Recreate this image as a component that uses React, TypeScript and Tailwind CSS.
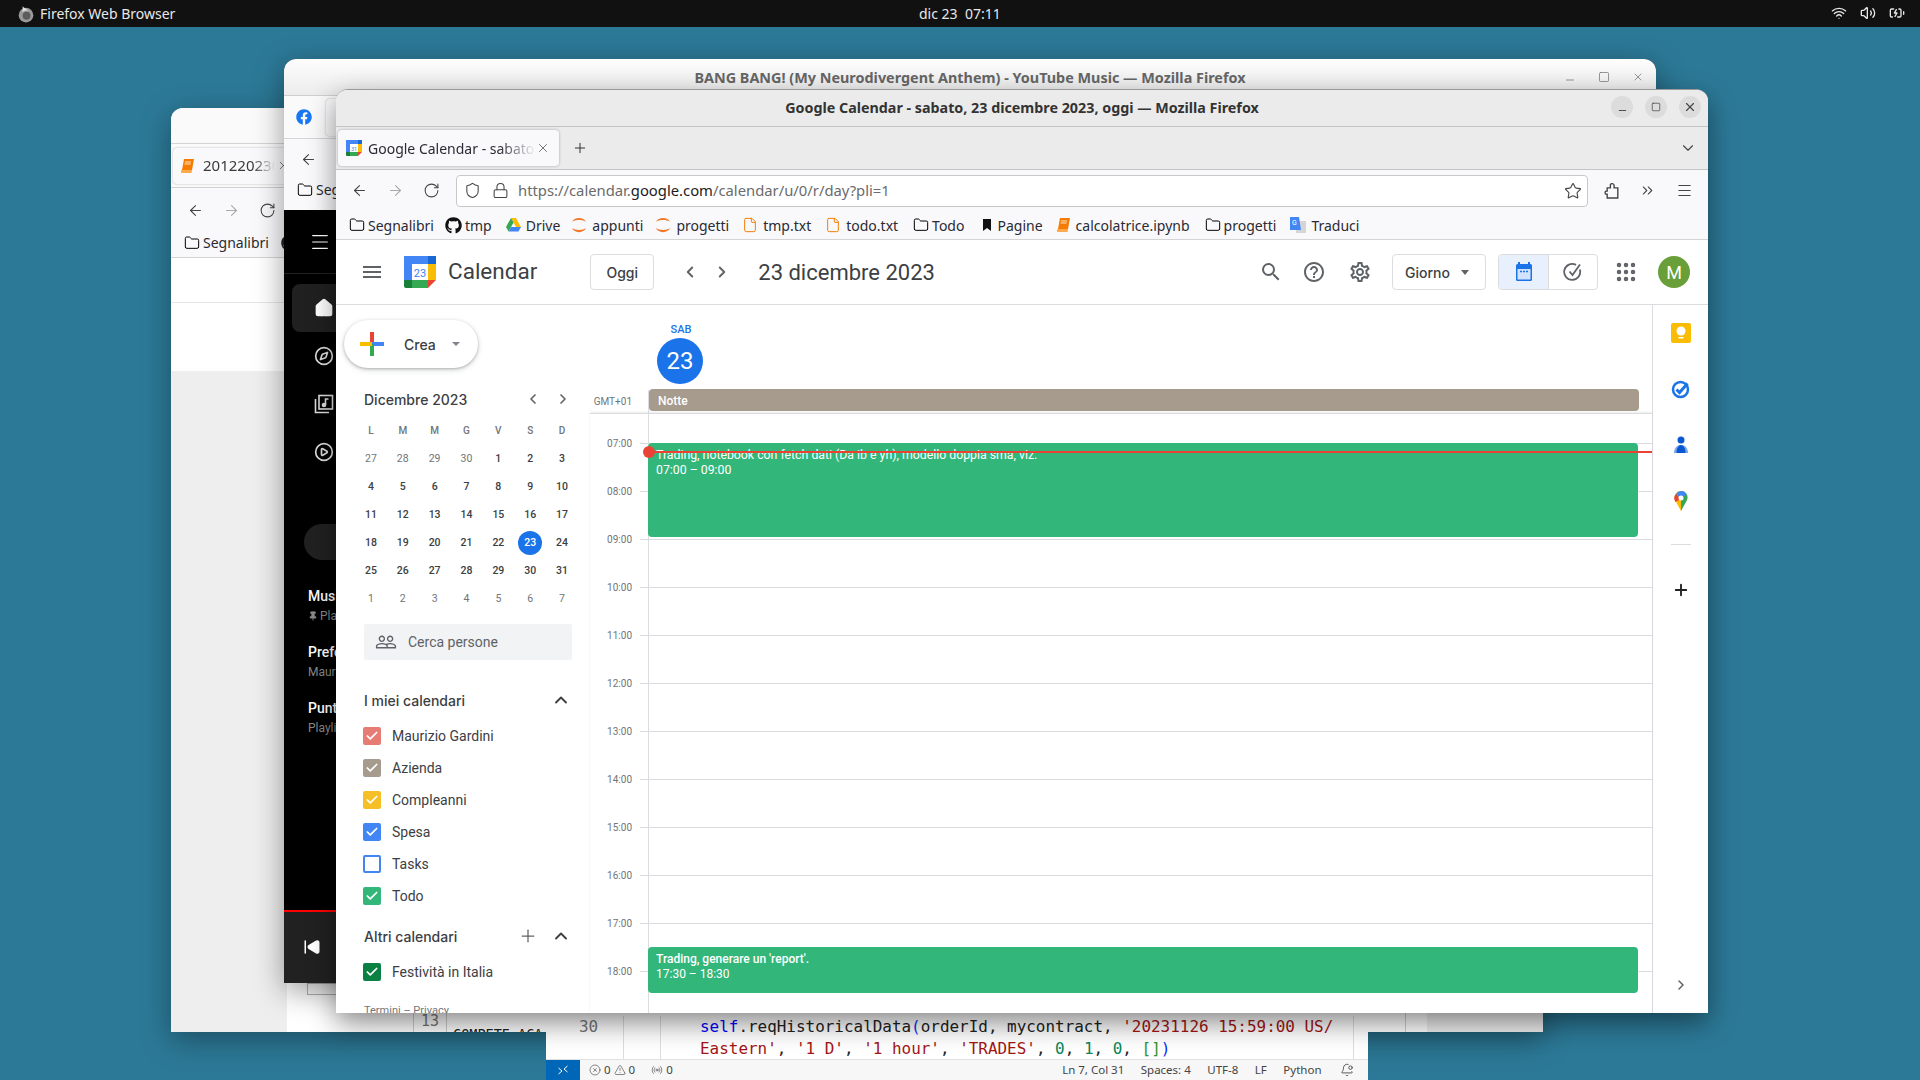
import {
  ArrowLeft,
  ArrowRight,
  BatteryCharging,
  BellDot,
  Check,
  ChevronDown,
  ChevronLeft,
  ChevronRight,
  ChevronUp,
  ChevronsRight,
  CirclePlay,
  CircleX,
  Compass,
  File,
  Folder,
  Grip,
  Home,
  Lock,
  Menu,
  Minus,
  Pin,
  Plus,
  Radio,
  RotateCw,
  Shield,
  SkipBack,
  Square,
  Star,
  TriangleAlert,
  Volume2,
  Wifi,
  X,
} from "lucide-react";
import { FaFacebook, FaGithub } from "react-icons/fa";
import { MdHelpOutline, MdMenu, MdOutlineSettings, MdPeopleOutline, MdSearch } from "react-icons/md";

const ChromeIcon = { size: 17, strokeWidth: 1.5 };
const FolderIcon = { size: 16, strokeWidth: 1.5 };

function CalendarLogo({ size = 32, small = false }: { size?: number; small?: boolean }) {
  return (
    <svg width={size} height={size} viewBox="0 0 32 32" className="shrink-0">
      <rect x="0" y="0" width="25" height="8" rx="1" fill="#4285f4" />
      <rect x="0" y="0" width="8" height="25" rx="1" fill="#4285f4" />
      <rect x="24" y="0" width="8" height="8" fill="#1967d2" />
      <rect x="24" y="8" width="8" height="16" fill="#fbbc04" />
      <rect x="8" y="24" width="16" height="8" fill="#34a853" />
      <path d="M0 24h8v8H2a2 2 0 0 1-2-2z" fill="#188038" />
      <path d="M24 24h8l-8 8z" fill="#ea4335" />
      <rect x="8" y="8" width="16" height="16" fill="#fff" />
      <text x="16" y="21" textAnchor="middle" fontSize="11" fontFamily="Roboto, sans-serif" fill="#4285f4">
        {small ? "31" : "23"}
      </text>
    </svg>
  );
}

function BookIcon() {
  return (
    <svg width="14" height="16" viewBox="0 0 14 16" className="shrink-0">
      <path d="M3 1h10l-2 11H1z" fill="#f57c00" />
      <path d="M1 12h10l-.5 3H1.500a1.500 1.500 0 0 1-.5-3z" fill="#ffa94d" />
      <path d="M4 4h6M3.600 6h6" stroke="#fff" strokeWidth="0.8" />
    </svg>
  );
}

function JupyterIcon() {
  return (
    <svg width="16" height="18" viewBox="0 0 16 18" className="shrink-0">
      <path d="M1 6c2-5.500 12-5.500 14 0-3-2.600-11-2.600-14 0z" fill="#f37726" />
      <path d="M1 12c2 5.500 12 5.500 14 0-3 2.600-11 2.600-14 0z" fill="#f37726" />
    </svg>
  );
}

function DriveIcon() {
  return (
    <svg width="15" height="14" viewBox="0 0 15 14" className="shrink-0">
      <path d="M5 0h5l5 9h-5z" fill="#fbbc04" />
      <path d="M5 0l2.500 4.500L2.500 13.500 0 9z" fill="#34a853" />
      <path d="M2.500 13.500 5 9h10l-2.500 4.500z" fill="#4285f4" />
    </svg>
  );
}

function FirefoxGlyph() {
  return (
    <svg width="18" height="18" viewBox="0 0 16 16" className="shrink-0">
      <circle cx="8" cy="9" r="6.500" fill="#9a9a9a" />
      <circle cx="8.500" cy="9.500" r="3.500" fill="#5c5c5c" />
      <path d="M5 1c1 2 4 2 5 4-2-.5-4 0-5 1.500z" fill="#e0e0e0" />
    </svg>
  );
}

function PuzzleGlyph({ className }: { className?: string }) {
  return (
    <svg width="17" height="17" viewBox="0 0 16 16" fill="none" stroke="currentColor" strokeWidth="1.300" className={className}>
      <path d="M5 15h8V5.500H9.500V3a1.900 1.900 0 0 0-3.500-.5V5.500H3V8.500h-.5a1.500 1.500 0 0 0 0 3H3V15z" />
    </svg>
  );
}

function WindowTitle({ children, className }: { children: string; className?: string }) {
  return <span className={`font-bold ${className ?? ""}`}>{children}</span>;
}

function Bookmark({ icon, label, className }: { icon: React.ReactNode; label: string; className?: string }) {
  return (
    <div className={`flex items-center shrink-0 ${className ?? "gap-[5px]"}`}>
      {icon}
      <span className="text-[14px] text-[#2b2a33]">{label}</span>
    </div>
  );
}

function BackWindowOne() {
  return (
    <div className="absolute left-[171px] top-[108px] w-[1372px] h-[924px] flex flex-col rounded-t-[12px] overflow-hidden bg-white shadow-[0_8px_30px_rgba(0,0,0,0.35)] font-['Noto_Sans',sans-serif]">
      <div className="h-[36px] bg-[#fafafa] border-b border-[#d4d4d4]" />
      <div className="h-[44px] bg-[#fafafa] border-b border-[#d0d0d0] flex items-center pl-[2px]">
        <div className="w-[130px] h-[36px] rounded bg-[#f9f9fb] shadow-[0_0_2px_rgba(0,0,0,0.3)] flex items-center pl-[8px] gap-[8px]">
          <BookIcon />
          <span className="text-[15px] text-[#3a3a3a] [mask-image:linear-gradient(to_right,black_70%,transparent)] w-[72px] overflow-hidden">20122023012</span>
          <X size={13} strokeWidth={1.25} className="-ml-[6px] shrink-0 text-[#444]" />
        </div>
      </div>
      <div className="h-[70px] bg-[#f9f9fb] border-b border-[#d4d4d4] flex flex-col">
        <div className="h-[44px] flex items-center gap-[19px] pl-[16px] text-[#444]">
          <ArrowLeft {...ChromeIcon} />
          <ArrowRight {...ChromeIcon} className="text-[#aaa]" />
          <RotateCw {...ChromeIcon} />
        </div>
        <div className="flex items-center pl-[13px]">
          <Bookmark className="gap-[3px]" icon={<Folder {...FolderIcon} />} label="Segnalibri" />
          <FaGithub size={16} className="ml-[12px] text-[#222]" />
        </div>
      </div>
      <div className="h-[45px] bg-white border-b border-[#e6e6e6]" />
      <div className="flex-1 flex">
        <div className="w-[116px] bg-[#eeeeee] mt-[68px]" />
        <div className="flex-1 bg-white relative">
          <div className="absolute left-[20px] bottom-[37px] w-[300px] h-[12px] border border-[#b5b5b5]" />
          <div className="absolute left-[126px] bottom-0 h-[19px] w-[34px] border-x border-[#cfcfcf] text-center font-['DejaVu_Sans_Mono',monospace] text-[15px] leading-[16px] text-[#777]">13</div>
          <div className="absolute left-[166px] bottom-[-11px] font-['DejaVu_Sans_Mono',monospace] text-[13.500px] leading-[18px] text-[#222]">COMPETE ACA</div>
          <div className="absolute left-[1118px] bottom-0 h-[19px] w-[22px] border-l border-[#cfcfcf]" />
        </div>
        <div className="w-[116px] bg-[#eeeeee] mt-[68px]" />
      </div>
    </div>
  );
}

function BackWindowTwo() {
  return (
    <div className="absolute left-[284px] top-[59px] w-[1372px] h-[924px] flex flex-col rounded-t-[12px] overflow-hidden bg-black shadow-[0_8px_30px_rgba(0,0,0,0.4)] font-['Noto_Sans',sans-serif]">
      <div className="h-[37px] bg-gradient-to-b from-[#fdfdfd] to-[#ececec] border-b border-[#cfcfcf] flex items-center relative">
        <div className="flex-1 text-center text-[#666]">
          <WindowTitle className="text-[14.400px]">BANG BANG! (My Neurodivergent Anthem) - YouTube Music — Mozilla Firefox</WindowTitle>
        </div>
        <div className="absolute right-[12px] top-[12px] flex items-center gap-[22px] text-[#777]">
          <Minus size={12} strokeWidth={1.5} className="translate-y-[3px]" />
          <Square size={12} strokeWidth={1.5} />
          <X size={12} strokeWidth={1.5} />
        </div>
      </div>
      <div className="h-[43px] bg-[#fafafa] border-b border-[#d4d4d4] flex items-center pl-[12px]">
        <FaFacebook size={16} className="text-[#1877f2]" />
        <div className="ml-[14px] w-[200px] h-[37px] rounded bg-[#f9f9fb] shadow-[0_0_2px_rgba(0,0,0,0.3)]" />
      </div>
      <div className="h-[71px] bg-[#f9f9fb] flex flex-col">
        <div className="h-[40px] flex items-center pl-[16px] text-[#444]">
          <ArrowLeft {...ChromeIcon} />
        </div>
        <div className="flex items-center pl-[13px]">
          <Bookmark className="gap-[3px]" icon={<Folder {...FolderIcon} />} label="Segnalibri" />
        </div>
      </div>
      <div className="flex-1 flex flex-col bg-black font-['Roboto',sans-serif]">
        <div className="h-[64px] border-b border-[#222] flex items-center pl-[25px] text-white">
          <Menu size={22} strokeWidth={1.25} />
        </div>
        <div className="flex flex-col mt-[10px] pl-[8px] text-[#ddd]">
          <div className="h-[48px] w-[120px] rounded-lg bg-[#202020] flex items-center pl-[22px] text-white">
            <Home size={20} fill="currentColor" />
          </div>
          <div className="h-[48px] flex items-center pl-[22px]"><Compass size={20} /></div>
          <div className="h-[48px] flex items-center pl-[22px]">
            <svg width="20" height="20" viewBox="0 0 20 20" fill="none" stroke="currentColor" strokeWidth="1.6">
              <rect x="5" y="1.500" width="13.500" height="13.500" />
              <path d="M1.500 5v13.500H15" />
              <path d="M11.500 11V5h3" />
              <circle cx="10" cy="11" r="1.500" fill="currentColor" />
            </svg>
          </div>
          <div className="h-[48px] flex items-center pl-[22px]"><CirclePlay size={20} /></div>
        </div>
        <div className="mt-[48px] ml-[20px] h-[36px] w-[200px] rounded-full bg-[#212121]" />
        <div className="flex flex-col mt-[26px] pl-[24px] text-[14px] font-medium text-white">
          <div className="h-[20px] leading-[20px]">Musica piaciuta</div>
          <div className="h-[20px] flex items-center gap-[2px] text-[12px] font-normal text-[#8a8a8a]"><Pin size={10} fill="currentColor" /> Playlist</div>
          <div className="h-[20px] leading-[20px] mt-[16px]">Preferiti</div>
          <div className="h-[20px] text-[12px] leading-[20px] font-normal text-[#8a8a8a]">Maurizio</div>
          <div className="h-[20px] leading-[20px] mt-[16px]">Punti</div>
          <div className="h-[20px] text-[12px] leading-[20px] font-normal text-[#8a8a8a]">Playlist</div>
        </div>
        <div className="flex-1" />
        <div className="h-[2px] bg-[#ff0000]" />
        <div className="h-[71px] bg-[#212121] flex items-center pl-[19px] pb-[1px] text-white">
          <SkipBack size={18} fill="currentColor" />
        </div>
      </div>
    </div>
  );
}

function CodeWindow() {
  return (
    <div className="absolute left-[546px] top-[1000px] w-[822px] h-[80px] flex flex-col bg-white overflow-hidden">
      <div className="flex-1 min-h-0 flex font-['DejaVu_Sans_Mono',monospace] text-[15.950px] leading-[22px] pt-[16px]">
        <div className="w-[78px] pl-[33px] text-[#777] border-r border-[#ddd]">30</div>
        <div className="w-[37px] border-r border-[#ddd]" />
        <div className="w-[693px] pl-[39px] text-[#a31515] whitespace-pre border-r border-[#ddd]">
          <div>
            <span className="text-[#0000ff]">self</span>
            <span className="text-[#222]">.reqHistoricalData</span>
            <span className="text-[#0431fa]">(</span>
            <span className="text-[#222]">orderId, mycontract, </span>
            '20231126 15:59:00 US/
          </div>
          <div>
            Eastern'<span className="text-[#222]">, </span>'1 D'<span className="text-[#222]">, </span>'1 hour'
            <span className="text-[#222]">, </span>'TRADES'<span className="text-[#222]">, </span>
            <span className="text-[#098658]">0</span><span className="text-[#222]">, </span>
            <span className="text-[#098658]">1</span><span className="text-[#222]">, </span>
            <span className="text-[#098658]">0</span><span className="text-[#222]">, </span>
            <span className="text-[#319331]">[]</span><span className="text-[#0431fa]">)</span>
          </div>
        </div>
      </div>
      <div className="h-[21px] shrink-0 bg-[#f7f7f7] border-t border-[#e0e0e0] flex items-center text-[11.500px] text-[#444] font-['Noto_Sans',sans-serif]">
        <div className="w-[34px] h-full bg-[#0066b8] flex items-center justify-center text-white">
          <svg width="12" height="12" viewBox="0 0 12 12" fill="none" stroke="currentColor" strokeWidth="1">
            <path d="M1.500 4l3.500 3-3.500 3M10.500 2L7 5l3.500 3" />
          </svg>
        </div>
        <div className="flex items-center gap-[3px] ml-[9px]">
          <CircleX size={12} strokeWidth={1.25} /> 0 <TriangleAlert size={12} strokeWidth={1.25} /> 0
        </div>
        <div className="flex items-center gap-[3px] ml-[16px]">
          <Radio size={12} strokeWidth={1.25} /> 0
        </div>
        <div className="flex-1" />
        <div className="flex items-center gap-[16.500px] pr-[14px]">
          <span>Ln 7, Col 31</span>
          <span>Spaces: 4</span>
          <span>UTF-8</span>
          <span>LF</span>
          <span>Python</span>
          <BellDot size={14} strokeWidth={1.5} className="ml-[2px]" />
        </div>
      </div>
    </div>
  );
}

const miniDays = [
  ["27", "28", "29", "30", "1", "2", "3"],
  ["4", "5", "6", "7", "8", "9", "10"],
  ["11", "12", "13", "14", "15", "16", "17"],
  ["18", "19", "20", "21", "22", "23", "24"],
  ["25", "26", "27", "28", "29", "30", "31"],
  ["1", "2", "3", "4", "5", "6", "7"],
];

function MiniCalendar() {
  return (
    <div className="w-[223px] ml-[19px] font-['Roboto',sans-serif]">
      <div className="grid grid-cols-7 text-[10px] font-medium text-[#70757a]">
        {["L", "M", "M", "G", "V", "S", "D"].map((d, i) => (
          <div key={i} className="h-[28px] pb-[2px] flex items-center justify-center">{d}</div>
        ))}
      </div>
      {miniDays.map((row, r) => (
        <div key={r} className="grid grid-cols-7 text-[10.500px] font-medium">
          {row.map((d, i) => {
            const muted = (r === 0 && i < 4) || r === 5;
            const today = r === 3 && i === 5;
            return (
              <div key={i} className="h-[28px] flex items-center justify-center">
                <span
                  className={
                    today
                      ? "w-[24px] h-[24px] rounded-full bg-[#1a73e8] text-white flex items-center justify-center"
                      : muted
                        ? "text-[#70757a] font-normal"
                        : "text-[#3c4043]"
                  }
                >
                  {d}
                </span>
              </div>
            );
          })}
        </div>
      ))}
    </div>
  );
}

function CalendarRow({ label, color, checked = true }: { label: string; color: string; checked?: boolean }) {
  return (
    <div className="h-[32px] flex items-center pl-[27px] font-['Roboto',sans-serif] text-[14px] text-[#3c4043]">
      <span
        className="w-[18px] h-[18px] rounded-[2px] flex items-center justify-center"
        style={checked ? { backgroundColor: color } : { border: `2px solid ${color}` }}
      >
        {checked && <Check size={14} strokeWidth={3} className="text-white" />}
      </span>
      <span className="ml-[11px]">{label}</span>
    </div>
  );
}

function Sidebar() {
  return (
    <div className="w-[254px] shrink-0 flex flex-col overflow-hidden">
      <div className="ml-[8px] mt-[15px] w-[134px] h-[48px] shrink-0 rounded-full bg-white shadow-[0_1px_3px_rgba(60,64,67,0.35),0_2px_6px_rgba(60,64,67,0.15)] flex items-center pl-[16px]">
        <svg width="24" height="24" viewBox="0 0 24 24">
          <rect x="10" y="0" width="4" height="12" fill="#ea4335" />
          <rect x="12" y="10" width="12" height="4" fill="#4285f4" />
          <rect x="10" y="12" width="4" height="12" fill="#34a853" />
          <rect x="0" y="10" width="12" height="4" fill="#fbbc04" />
        </svg>
        <span className="ml-[20px] text-[14px] font-medium text-[#3c4043] font-['Inter',sans-serif]">Crea</span>
        <span className="ml-[16px] w-0 h-0 border-x-[4px] border-x-transparent border-t-[4px] border-t-[#80868b]" />
      </div>
      <div className="mt-[19px] ml-[28px] mr-[19px] h-[24px] shrink-0 flex items-center font-['Inter',sans-serif] text-[14px] font-medium text-[#3c4043]">
        <span className="flex-1">Dicembre 2023</span>
        <ChevronLeft size={16} strokeWidth={2.5} className="text-[#5f6368]" />
        <ChevronRight size={16} strokeWidth={2.5} className="ml-[14px] text-[#5f6368]" />
      </div>
      <div className="mt-[6px] shrink-0">
        <MiniCalendar />
      </div>
      <div className="mt-[11px] ml-[28px] w-[208px] h-[36px] shrink-0 bg-[#f1f3f4] rounded-[2px] flex items-center pl-[11px] font-['Roboto',sans-serif] text-[14px] text-[#5f6368]">
        <MdPeopleOutline size={22} />
        <span className="ml-[11px]">Cerca persone</span>
      </div>
      <div className="mt-[24px] ml-[28px] mr-[19px] h-[32px] shrink-0 flex items-center font-['Inter',sans-serif] text-[14px] font-medium text-[#3c4043]">
        <span className="flex-1">I miei calendari</span>
        <ChevronUp size={20} strokeWidth={2.25} />
      </div>
      <div className="mt-[4px] shrink-0">
        <CalendarRow label="Maurizio Gardini" color="#e67c73" />
        <CalendarRow label="Azienda" color="#a79b8e" />
        <CalendarRow label="Compleanni" color="#f6bf26" />
        <CalendarRow label="Spesa" color="#4285f4" />
        <CalendarRow label="Tasks" color="#4285f4" checked={false} />
        <CalendarRow label="Todo" color="#33b679" />
      </div>
      <div className="mt-[8px] ml-[28px] mr-[19px] h-[32px] shrink-0 flex items-center font-['Inter',sans-serif] text-[14px] font-medium text-[#3c4043]">
        <span className="flex-1">Altri calendari</span>
        <Plus size={20} strokeWidth={1.5} className="mr-[13px] text-[#5f6368]" />
        <ChevronUp size={20} strokeWidth={2.25} />
      </div>
      <div className="mt-[4px] shrink-0">
        <CalendarRow label="Festività in Italia" color="#0b8043" />
      </div>
      <div className="mt-[16px] ml-[28px] shrink-0 font-['Roboto',sans-serif] text-[11px] leading-[14px] text-[#70757a]">Termini – Privacy</div>
    </div>
  );
}

const hours = ["07:00", "08:00", "09:00", "10:00", "11:00", "12:00", "13:00", "14:00", "15:00", "16:00", "17:00", "18:00"];

function DayGrid() {
  return (
    <div className="flex-1 min-w-0 flex flex-col font-['Roboto',sans-serif]">
      <div className="h-[108px] shrink-0 flex">
        <div className="w-[58px] pr-[16px] pt-[85px] text-right text-[10px] leading-[24px] text-[#70757a]">GMT+01</div>
        <div className="flex-1 flex flex-col [border-image:linear-gradient(to_bottom,transparent_78%,#dadce0_78%)_1] border-l border-[#dadce0]">
          <div className="w-[64px] flex flex-col items-center mt-[18px]">
            <span className="text-[11px] leading-[14px] font-medium text-[#1a73e8]">SAB</span>
          </div>
          <div className="w-[46px] h-[46px] ml-[8px] mt-[1px] rounded-full bg-[#1a73e8] text-white text-[24px] flex items-center justify-center">23</div>
          <div className="mt-[5px] mr-[13px] h-[22px] rounded bg-[#a79b8e] text-white text-[12px] font-medium flex items-center pl-[9px] pt-[1px]">Notte</div>
        </div>
      </div>
      <div className="flex-1 flex flex-col relative border-t border-[#dadce0] shadow-[0_-1px_2px_rgba(60,64,67,0.1)] overflow-hidden">
        <div className="h-[29px] shrink-0 ml-[58px] border-l border-[#dadce0]" />
        {hours.map((h) => (
          <div key={h} className="h-[48px] shrink-0 flex">
            <div className="w-[42px] text-right text-[10px] leading-[2px] text-[#70757a]">{h}</div>
            <div className="w-[8px]" />
            <div className="w-[8px] border-t border-[#dadce0]" />
            <div className="flex-1 border-t border-l border-[#dadce0]" />
          </div>
        ))}
        <div className="absolute left-[58px] right-[14px] top-[29px] h-[94px] rounded bg-[#33b679] text-white text-[12.300px] leading-[15px] pl-[8px] pt-[5px]">
          <div>Trading, notebook con fetch dati (Da ib e yh), modello doppia sma, viz.</div>
          <div>07:00 – 09:00</div>
        </div>
        <div className="absolute left-[58px] right-[14px] top-[533px] h-[46px] rounded bg-[#33b679] text-white text-[12px] leading-[15px] pl-[8px] pt-[5px]">
          <div className="font-medium">Trading, generare un 'report'.</div>
          <div>17:30 – 18:30</div>
        </div>
        <div className="absolute left-[59px] right-0 top-[37px] h-[2px] bg-[#ea4335]" />
        <div className="absolute left-[53px] top-[32px] w-[12px] h-[12px] rounded-full bg-[#ea4335]" />
      </div>
    </div>
  );
}

function AddonRail() {
  return (
    <div className="w-[56px] shrink-0 border-l border-[#dadce0] flex flex-col items-center">
      <div className="mt-[18px] w-[20px] h-[20px] rounded-[2px] bg-[#fbbc04] flex items-center justify-center">
        <svg width="12" height="14" viewBox="0 0 12 14">
          <circle cx="6" cy="5" r="4.500" fill="#fff" />
          <rect x="3.500" y="11" width="5" height="1.500" fill="#fff" />
        </svg>
      </div>
      <div className="mt-[36px]">
        <svg width="20" height="20" viewBox="0 0 20 20">
          <circle cx="9.500" cy="10.500" r="7.500" fill="none" stroke="#1a73e8" strokeWidth="2.500" />
          <path d="M5.500 10.500l3 3 8-9" fill="none" stroke="#1a73e8" strokeWidth="3" />
        </svg>
      </div>
      <div className="mt-[36px]">
        <svg width="20" height="20" viewBox="0 0 20 20">
          <circle cx="10" cy="5" r="3.500" fill="#0b57d0" />
          <path d="M3 18c0-5 3-8 7-8s7 3 7 8z" fill="#7aa7f0" />
          <path d="M5.500 18c0-5 2-8 4.500-8s4.500 3 4.500 8z" fill="#0b57d0" />
        </svg>
      </div>
      <div className="mt-[36px]">
        <svg width="16" height="20" viewBox="0 0 16 20">
          <path d="M8 0a6.500 6.500 0 0 1 5.500 10L8 20z" fill="#34a853" />
          <path d="M8 0a6.500 6.500 0 0 0-5.500 10L8 20z" fill="#fbbc04" />
          <path d="M3 3l5 5-5.500 3a6.500 6.500 0 0 1 .5-8z" fill="#ea4335" />
          <path d="M8 0a6.500 6.500 0 0 1 5.500 3L8 8 3 3a6.500 6.500 0 0 1 5-3z" fill="#4285f4" />
          <circle cx="8" cy="7" r="2.500" fill="#fff" />
        </svg>
      </div>
      <div className="mt-[33px] w-[20px] h-px bg-[#dadce0]" />
      <Plus size={18} strokeWidth={2.5} className="mt-[36px] text-[#222]" />
      <div className="flex-1" />
      <ChevronRight size={16} strokeWidth={2.25} className="mb-[20px] text-[#5f6368]" />
    </div>
  );
}

function CalendarWindow() {
  return (
    <div className="absolute left-[336px] top-[89px] w-[1372px] h-[924px] flex flex-col rounded-t-[12px] overflow-hidden bg-white border-t border-[#9a9a9a] shadow-[0_10px_28px_rgba(0,0,0,0.45)] font-['Noto_Sans',sans-serif]">
      <div className="h-[37px] shrink-0 bg-[#ebebeb] border-b border-[#c4c4c4] relative flex items-center justify-center text-[#333]">
        <WindowTitle className="text-[14.300px]">Google Calendar - sabato, 23 dicembre 2023, oggi — Mozilla Firefox</WindowTitle>
        <div className="absolute right-[7px] top-[6px] flex items-center gap-[12px] text-[#444]">
          <span className="w-[22px] h-[22px] rounded-full bg-[#dcdcdc] flex items-center justify-center"><Minus size={11} className="translate-y-[3px]" /></span>
          <span className="w-[22px] h-[22px] rounded-full bg-[#dcdcdc] flex items-center justify-center"><Square size={10} strokeWidth={1.75} /></span>
          <span className="w-[22px] h-[22px] rounded-full bg-[#dcdcdc] flex items-center justify-center"><X size={14} /></span>
        </div>
      </div>
      <div className="h-[43px] shrink-0 bg-[#ebebeb] border-b border-[#c4c4c4] flex items-center pl-[2px]">
        <div className="w-[221px] h-[36px] rounded bg-[#f9f9fb] shadow-[0_0_3px_rgba(0,0,0,0.3)] flex items-center pl-[8px]">
          <CalendarLogo size={16} small />
          <span className="ml-[6px] w-[168px] whitespace-nowrap overflow-hidden text-[14px] text-[#2b2a33] [mask-image:linear-gradient(to_right,black_78%,transparent)]">Google Calendar - sabato</span>
          <X size={14} strokeWidth={1.25} className="text-[#444]" />
        </div>
        <Plus size={16} strokeWidth={1.5} className="ml-[13px] text-[#333]" />
        <div className="flex-1" />
        <ChevronDown size={18} strokeWidth={1.5} className="mr-[11px] text-[#444]" />
      </div>
      <div className="h-[70px] shrink-0 bg-[#f9f9fb] border-b border-[#d4d4d4] flex flex-col">
        <div className="h-[41px] flex items-center pl-[15px] text-[#444]">
          <ArrowLeft {...ChromeIcon} />
          <ArrowRight {...ChromeIcon} className="ml-[19px] text-[#aaa]" />
          <RotateCw {...ChromeIcon} className="ml-[19px]" />
          <div className="ml-[16px] w-[1132px] h-[32px] bg-white rounded border border-[#c8c8c8] flex items-center pl-[7px]">
            <Shield {...ChromeIcon} />
            <Lock {...ChromeIcon} className="ml-[11px]" />
            <span className="ml-[9px] text-[14.800px] text-[#6b6b6b] whitespace-nowrap">
              https://calendar.<span className="text-[#1c1b22]">google.com</span>/calendar/u/0/r/day?pli=1
            </span>
            <div className="flex-1" />
            <Star {...ChromeIcon} className="mr-[5px]" size={18} />
          </div>
          <PuzzleGlyph className="ml-[16px]" />
          <ChevronsRight {...ChromeIcon} className="ml-[18px]" />
          <Menu {...ChromeIcon} className="ml-[20px]" />
        </div>
        <div className="flex-1 flex items-center pl-[13px]">
          <Bookmark className="gap-[3px]" icon={<Folder {...FolderIcon} />} label="Segnalibri" />
          <Bookmark className="ml-[11px] gap-[3px]" icon={<FaGithub size={17} className="text-[#111]" />} label="tmp" />
          <Bookmark className="ml-[14px] gap-[5px]" icon={<DriveIcon />} label="Drive" />
          <Bookmark className="ml-[11px] gap-[5px]" icon={<JupyterIcon />} label="appunti" />
          <Bookmark className="ml-[12px] gap-[5px]" icon={<JupyterIcon />} label="progetti" />
          <Bookmark className="ml-[13px] gap-[5px]" icon={<File size={16} strokeWidth={1.5} className="text-[#f57c00]" />} label="tmp.txt" />
          <Bookmark className="ml-[14px] gap-[5px]" icon={<File size={16} strokeWidth={1.5} className="text-[#f57c00]" />} label="todo.txt" />
          <Bookmark className="ml-[15px] gap-[3px]" icon={<Folder {...FolderIcon} />} label="Todo" />
          <Bookmark
            className="ml-[18px] gap-[5px]"
            icon={
              <svg width="10" height="14" viewBox="0 0 10 14">
                <path d="M1 1h8v12L5 10l-4 3z" fill="#111" />
              </svg>
            }
            label="Pagine"
          />
          <Bookmark className="ml-[14px] gap-[5px]" icon={<BookIcon />} label="calcolatrice.ipynb" />
          <Bookmark className="ml-[15px] gap-[3px]" icon={<Folder {...FolderIcon} />} label="progetti" />
          <Bookmark
            className="ml-[14px] gap-[5px]"
            icon={
              <svg width="16" height="16" viewBox="0 0 16 16">
                <rect x="6" y="4" width="10" height="12" fill="#d5d5d5" />
                <path d="M0 0h9l2 13H0z" fill="#4285f4" />
                <text x="2" y="8" fontSize="7" fill="#fff" fontFamily="Roboto, sans-serif">G</text>
              </svg>
            }
            label="Traduci"
          />
        </div>
      </div>
      <div className="h-[65px] shrink-0 border-b border-[#dadce0] flex items-center font-['Roboto',sans-serif] text-[#3c4043]">
        <MdMenu size={24} className="ml-[24px] text-[#5f6368]" />
        <div className="ml-[20px]"><CalendarLogo /></div>
        <span className="ml-[12px] text-[22.500px]">Calendar</span>
        <div className="ml-[53px] w-[64px] h-[36px] border border-[#dadce0] rounded flex items-center justify-center text-[14px] font-medium font-['Inter',sans-serif]">Oggi</div>
        <ChevronLeft size={18} strokeWidth={2.5} className="ml-[27px] text-[#5f6368]" />
        <ChevronRight size={18} strokeWidth={2.5} className="ml-[14px] text-[#5f6368]" />
        <span className="ml-[27px] text-[22px]">23 dicembre 2023</span>
        <div className="flex-1" />
        <MdSearch size={24} className="text-[#5f6368]" />
        <MdHelpOutline size={24} className="ml-[19px] text-[#5f6368]" />
        <MdOutlineSettings size={24} className="ml-[22px] text-[#5f6368]" />
        <div className="ml-[20px] w-[94px] h-[36px] border border-[#dadce0] rounded flex items-center pl-[12px] text-[14px] font-medium font-['Inter',sans-serif]">
          Giorno
          <span className="ml-[11px] w-0 h-0 border-x-[4px] border-x-transparent border-t-[5px] border-t-[#5f6368]" />
        </div>
        <div className="ml-[12px] w-[100px] h-[36px] border border-[#dadce0] rounded flex overflow-hidden">
          <div className="w-[50px] bg-[#e8f0fe] border-r border-[#dadce0] flex items-center justify-center">
            <svg width="18" height="20" viewBox="0 0 18 20">
              <rect x="3" y="0" width="2" height="4" fill="#1a73e8" />
              <rect x="13" y="0" width="2" height="4" fill="#1a73e8" />
              <rect x="1" y="2" width="16" height="17" rx="1.500" fill="#1a73e8" />
              <rect x="2.500" y="7" width="13" height="10.500" fill="#d2e3fc" />
              <path d="M5 9.500h2M8 9.500h2M11 9.500h2" stroke="#1a73e8" strokeWidth="1.500" />
            </svg>
          </div>
          <div className="flex-1 flex items-center justify-center text-[#5f6368]">
            <svg width="20" height="20" viewBox="0 0 20 20" fill="none" stroke="currentColor" strokeWidth="1.800">
              <path d="M16.800 7.500A8 8 0 1 1 13 2.900" />
              <path d="M6.500 9.500l3 3.500L17 2.500" />
            </svg>
          </div>
        </div>
        <Grip size={24} strokeWidth={2.5} className="ml-[16px] text-[#5f6368]" />
        <div className="ml-[20px] mr-[18px] w-[32px] h-[32px] rounded-full bg-[#689f38] text-white text-[18px] flex items-center justify-center">M</div>
      </div>
      <div className="flex-1 flex min-h-0">
        <Sidebar />
        <DayGrid />
        <AddonRail />
      </div>
    </div>
  );
}

export default function App() {
  return (
    <div className="relative w-[1920px] h-[1080px] overflow-hidden bg-[#2c7997]">
      <div className="h-[27px] bg-[#111111] relative flex items-center text-[#e8e8e8] text-[14px] font-['Noto_Sans',sans-serif]">
        <div className="ml-[17px]"><FirefoxGlyph /></div>
        <span className="ml-[5px]">Firefox Web Browser</span>
        <span className="absolute left-[919px] top-[3px] text-[14px]">dic 23&nbsp; 07:11</span>
        <div className="absolute right-[15px] top-[5px] flex items-center gap-[13px]">
          <Wifi size={16} />
          <Volume2 size={16} />
          <BatteryCharging size={16} />
        </div>
      </div>
      <BackWindowOne />
      <CodeWindow />
      <BackWindowTwo />
      <CalendarWindow />
    </div>
  );
}
